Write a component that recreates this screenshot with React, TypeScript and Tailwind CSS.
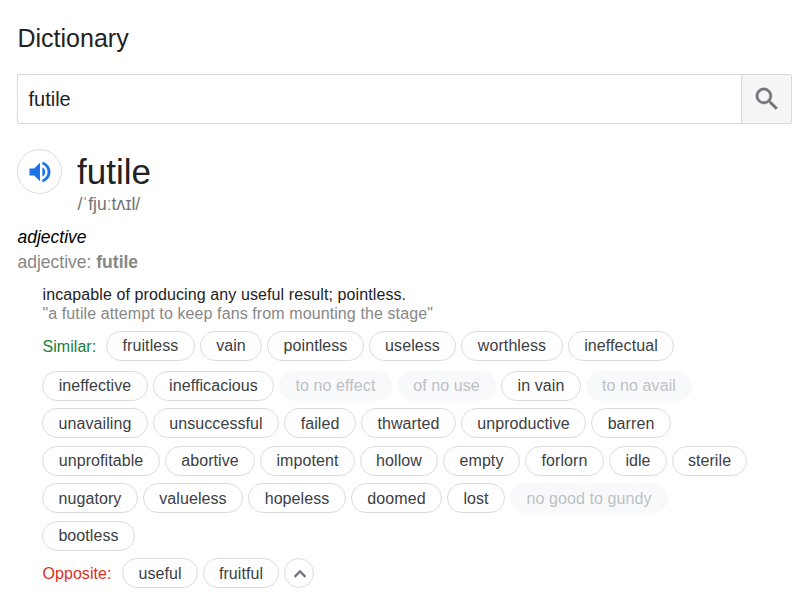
type Word = { text: string; width: string; muted?: boolean };

const similarFirst: Word[] = [
  { text: 'fruitless', width: 'w-[89px]' },
  { text: 'vain', width: 'w-[62px]' },
  { text: 'pointless', width: 'w-[97px]' },
  { text: 'useless', width: 'w-[87px]' },
  { text: 'worthless', width: 'w-[102px]' },
  { text: 'ineffectual', width: 'w-[106px]' },
];

const similarRows: { space: string; pad: string; words: Word[] }[] = [
  {
    space: 'mt-[10px]',
    pad: 'pb-px',
    words: [
      { text: 'ineffective', width: 'w-[106px]' },
      { text: 'inefficacious', width: 'w-[121px]' },
      { text: 'to no effect', width: 'w-[113px]', muted: true },
      { text: 'of no use', width: 'w-[99px]', muted: true },
      { text: 'in vain', width: 'w-[80px]' },
      { text: 'to no avail', width: 'w-[106px]', muted: true },
    ],
  },
  {
    space: 'mt-[7px]',
    pad: 'pt-px',
    words: [
      { text: 'unavailing', width: 'w-[106px]' },
      { text: 'unsuccessful', width: 'w-[126px]' },
      { text: 'failed', width: 'w-[72px]' },
      { text: 'thwarted', width: 'w-[95px]' },
      { text: 'unproductive', width: 'w-[125px]' },
      { text: 'barren', width: 'w-[80px]' },
    ],
  },
  {
    space: 'mt-[8px]',
    pad: 'pb-px',
    words: [
      { text: 'unprofitable', width: 'w-[118px]' },
      { text: 'abortive', width: 'w-[90px]' },
      { text: 'impotent', width: 'w-[95px]' },
      { text: 'hollow', width: 'w-[78px]' },
      { text: 'empty', width: 'w-[77px]' },
      { text: 'forlorn', width: 'w-[79px]' },
      { text: 'idle', width: 'w-[58px]' },
      { text: 'sterile', width: 'w-[75px]' },
    ],
  },
  {
    space: 'mt-[7px]',
    pad: 'pt-px',
    words: [
      { text: 'nugatory', width: 'w-[96px]' },
      { text: 'valueless', width: 'w-[100px]' },
      { text: 'hopeless', width: 'w-[98px]' },
      { text: 'doomed', width: 'w-[91px]' },
      { text: 'lost', width: 'w-[58px]' },
      { text: 'no good to gundy', width: 'w-[158px]', muted: true },
    ],
  },
  { space: 'mt-[8px]', pad: 'pb-px', words: [{ text: 'bootless', width: 'w-[93px]' }] },
];

const opposite: Word[] = [
  { text: 'useful', width: 'w-[76px]' },
  { text: 'fruitful', width: 'w-[76px]' },
];

function Pill({ text, width, muted, pad }: Word & { pad: string }) {
  const tone = muted
    ? 'border-[#f8f9fa] bg-[#f8f9fa] text-[#bdc1c6]'
    : 'border-[#dadce0] bg-white text-[#3c4043]';
  return (
    <button
      className={`flex h-[30px] shrink-0 items-center justify-center rounded-full border text-base leading-5 tracking-[0.08px] whitespace-nowrap ${pad} ${width} ${tone}`}
    >
      {text}
    </button>
  );
}

export default function App() {
  return (
    <main className="h-[604px] w-[808px] overflow-hidden bg-white pr-4 pl-[17px] font-['Liberation_Sans',Arial,sans-serif] text-[#222]">
      <h1 className="pt-[23px] pl-[0.5px] text-[25px] leading-[30px]">Dictionary</h1>

      <div className="mt-[21px] flex h-[50px] overflow-hidden rounded-[2px] border border-[#d9d9d9]">
        <div className="flex flex-1 items-center pl-[10.5px] text-xl leading-6">futile</div>
        <button className="flex w-[50px] items-center justify-center border-l border-[#d9d9d9] bg-[#f5f5f5]">
          <svg viewBox="0 0 24 24" className="h-[30px] w-[30px] fill-[#70757a] stroke-[#70757a] stroke-[0.3]">
            <path d="M15.5 14h-.79l-.28-.27A6.471 6.471 0 0 0 16 9.5 6.5 6.5 0 1 0 9.5 16c1.61 0 3.09-.59 4.23-1.57l.27.28v.79l5 4.99L20.49 19l-4.99-5zm-6 0C7.01 14 5 11.99 5 9.5S7.01 5 9.5 5 14 7.01 14 9.5 11.99 14 9.5 14z" />
          </svg>
        </button>
      </div>

      <section className="mt-[25px] flex gap-[15px]">
        <button className="flex h-[45px] w-[45px] items-center justify-center rounded-full border border-[#dadce0]">
          <svg viewBox="0 0 24 24" className="h-[28px] w-[28px] fill-[#1a73e8]">
            <path d="M3 9v6h4l5 5V4L7 9H3zm13.5 3c0-1.77-1.02-3.29-2.5-4.03v8.05c1.48-.73 2.5-2.25 2.5-4.02z" />
            <path d="M14 3.23v2.4c2.6.9 4.5 3.4 4.5 6.37s-1.9 5.47-4.5 6.37v2.4c4.01-.91 7-4.49 7-8.77s-2.99-7.86-7-8.77z" />
          </svg>
        </button>
        <div>
          <h2 className="pt-[3px] text-[35px] leading-[40px]">futile</h2>
          <p className="mt-px pl-[0.5px] text-[17.5px] leading-[22px] text-[#70757a]">/ˈfjuːtʌɪl/</p>
        </div>
      </section>

      <p className="mt-[11px] pl-[0.5px] text-[17.5px] leading-[22px] text-black italic">adjective</p>
      <p className="mt-[3px] pl-[0.5px] text-[17.5px] leading-[22px] text-[#878787]">
        adjective: <b>futile</b>
      </p>

      <section className="pt-[12px] pl-[25px]">
        <p className="pl-[0.5px] text-base leading-[19px] tracking-[0.1px]">incapable of producing any useful result; pointless.</p>
        <p className="pl-[0.5px] text-base leading-[19px] tracking-[0.1px] text-[#878787]">"a futile attempt to keep fans from mounting the stage"</p>

        <div className="mt-[8px] flex gap-[5px]">
          <span className="h-[30px] w-[59px] pt-px pl-[0.5px] text-base leading-[30px] tracking-[0.05px] text-[#188038]">Similar:</span>
          {similarFirst.map((word) => (
            <Pill key={word.text} pad="pb-px" {...word} />
          ))}
        </div>
        {similarRows.map((row) => (
          <div key={row.words[0].text} className={`flex gap-[5px] ${row.space}`}>
            {row.words.map((word) => (
              <Pill key={word.text} pad={row.pad} {...word} />
            ))}
          </div>
        ))}
        <div className="mt-[7px] flex gap-[5px]">
          <span className="h-[30px] w-[75px] pt-px pl-[0.5px] text-base leading-[30px] tracking-[0.05px] text-[#d93025]">Opposite:</span>
          {opposite.map((word) => (
            <Pill key={word.text} pad="pt-px" {...word} />
          ))}
          <button className="flex h-[30px] w-[30px] items-center justify-center rounded-full border border-[#dadce0] pt-px pl-px">
            <svg viewBox="0 0 24 24" className="h-6 w-6 fill-[#70757a] stroke-[#70757a] stroke-[0.5]">
              <path d="M12 8l-6 6 1.41 1.41L12 10.83l4.59 4.58L18 14z" />
            </svg>
          </button>
        </div>
      </section>
    </main>
  );
}
